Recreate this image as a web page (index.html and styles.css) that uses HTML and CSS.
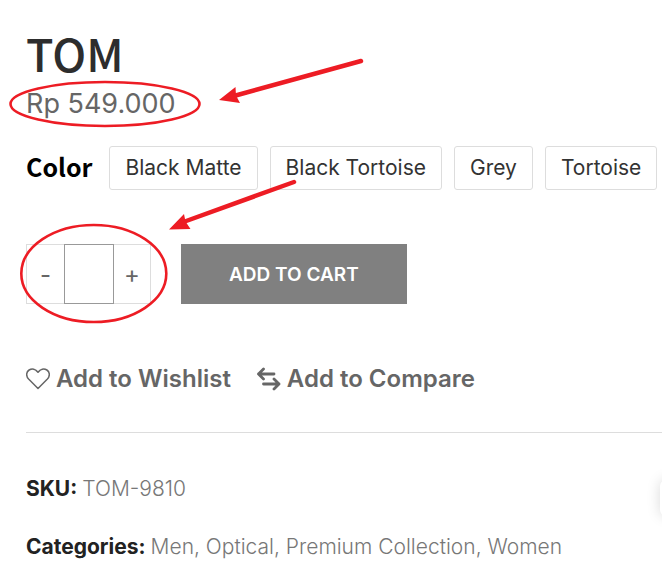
FILE: index.html
```html
<!DOCTYPE html>
<html lang="en">
<head>
<meta charset="utf-8">
<meta name="viewport" content="width=device-width, initial-scale=1">
<title>TOM</title>
<link rel="stylesheet" href="styles.css">
</head>
<body>
<main class="product">
  <h1 class="title">TOM</h1>
  <p class="price">Rp 549.000</p>

  <div class="options" role="group" aria-labelledby="color-label">
    <span class="options-label" id="color-label">Color</span>
    <button class="option" type="button">Black Matte</button>
    <button class="option" type="button">Black Tortoise</button>
    <button class="option" type="button">Grey</button>
    <button class="option" type="button">Tortoise</button>
  </div>

  <form class="cart">
    <div class="quantity">
      <button class="step" type="button">-</button>
      <input class="amount" type="text" inputmode="numeric" aria-label="Quantity">
      <button class="step" type="button">+</button>
    </div>
    <button class="add" type="submit">ADD TO CART</button>
  </form>

  <div class="actions">
    <a class="action" href="#wishlist">
      <svg class="icon" viewBox="0 0 24 24" aria-hidden="true"><path d="M12 21.5 2.600 12C-.3 8.800.3 4.800 3.100 3 6 1.200 9.600 1.900 12 5.300 14.400 1.900 18 1.200 20.900 3c2.800 1.800 3.400 5.800.5 9z" fill="none" stroke="currentColor" stroke-width="1.500" stroke-linejoin="round"/></svg>
      <span>Add to Wishlist</span>
    </a>
    <a class="action" href="#compare">
      <svg class="icon" viewBox="0 0 24 24" aria-hidden="true"><path d="M17 7H1.500M6.500 2 1.500 7l5 5M6.500 17H22M17 12l5 5-5 5" fill="none" stroke="currentColor" stroke-width="2.800" stroke-linecap="round" stroke-linejoin="round"/></svg>
      <span>Add to Compare</span>
    </a>
  </div>

  <dl class="meta">
    <div class="meta-row"><dt>SKU:</dt><dd>TOM-9810</dd></div>
    <div class="meta-row"><dt>Categories:</dt><dd><a href="#men">Men</a>, <a href="#optical">Optical</a>, <a href="#premium">Premium Collection</a>, <a href="#women">Women</a></dd></div>
  </dl>
</main>

<svg class="marks" width="662" height="576" viewBox="0 0 662 576" aria-hidden="true">
  <g fill="none" stroke="#ed1c24">
    <ellipse cx="105" cy="104" rx="94.500" ry="22" stroke-width="2.600"/>
    <ellipse cx="93.800" cy="273.500" rx="72.500" ry="48.500" stroke-width="2.600"/>
    <path d="M361 61 232 96.500M294 182 182 222.500" stroke-width="4.500" stroke-linecap="round"/>
  </g>
  <path d="M219 100 235.500 87l.5 8.500 4 7.500zM169 229.500 184 214l1.500 7.500 5 7.500z" fill="#ed1c24"/>
</svg>
<div class="floating-clip"><div class="floating"></div></div>
</body>
</html>
```
FILE: styles.css
```css
* {
  box-sizing: border-box;
}

body {
  margin: 0;
  background: #fff;
  color: #222;
  font-family: Inter, "Liberation Sans", sans-serif;
  position: relative;
}

button,
input {
  font: inherit;
  color: inherit;
  margin: 0;
}

a {
  color: inherit;
  text-decoration: none;
}

.product {
  padding: 29px 0 0 26px;
}

.title {
  margin: 0;
  font: 500 45px/48px "Noto Sans CJK JP", "Noto Sans", sans-serif;
  color: #2d2d2d;
}

.price {
  margin: 7px 0 22px;
  font-size: 27px;
  line-height: 40px;
  color: #666;
}

.options {
  display: flex;
  align-items: center;
  gap: 12px;
}

.options-label {
  margin-right: 5px;
  font: 700 25px/40px "Noto Sans CJK JP", "Noto Sans", sans-serif;
  padding-bottom: 4px;
  color: #000;
}

.option {
  height: 44px;
  padding: 0 15px 2px;
  border: 1px solid #ddd;
  border-radius: 3px;
  background: #fff;
  color: #333;
  font-size: 21px;
  white-space: nowrap;
}

.cart {
  display: flex;
  gap: 30px;
  margin-top: 54px;
}

.quantity {
  display: flex;
  height: 60px;
  color: #666;
  font-size: 24px;
}

.step {
  width: 38px;
  padding: 0;
  border: 1px solid #ddd;
  background: #fff;
}

.step:first-child {
  border-right: 0;
}

.step:last-child {
  width: 37px;
  border-left: 0;
}

.amount {
  width: 50px;
  border: 1px solid #999;
  border-radius: 0;
  background: #fff;
  text-align: center;
}

.add {
  padding: 0 48px;
  border: 0;
  background: #808080;
  color: #fff;
  font-size: 19px;
  font-weight: 600;
}

.actions {
  display: flex;
  gap: 26px;
  padding: 59px 0 37px;
  border-bottom: 1px solid #ddd;
  color: #666;
  font-size: 24px;
  line-height: 32px;
  font-weight: 600;
}

.action {
  display: flex;
  align-items: center;
  gap: 6px;
}

.icon {
  width: 24px;
  height: 24px;
}

.meta {
  display: flex;
  flex-direction: column;
  gap: 26px;
  margin: 40px 0 0;
  font-size: 21px;
  line-height: 32px;
}

.meta-row {
  display: flex;
  gap: 5px;
}

.meta dt {
  font-weight: 700;
}

.meta dd {
  margin: 0;
  color: #777;
  font-weight: 300;
}

.marks {
  position: absolute;
  top: 0;
  left: 0;
  pointer-events: none;
}

.floating-clip {
  position: absolute;
  top: 460px;
  right: 0;
  width: 24px;
  height: 76px;
  overflow: hidden;
}

.floating {
  width: 40px;
  height: 36px;
  margin: 20px 0 0 22px;
  border-radius: 6px;
  background: #fff;
  box-shadow: 0 0 14px rgba(0, 0, 0, 0.15);
}
```
